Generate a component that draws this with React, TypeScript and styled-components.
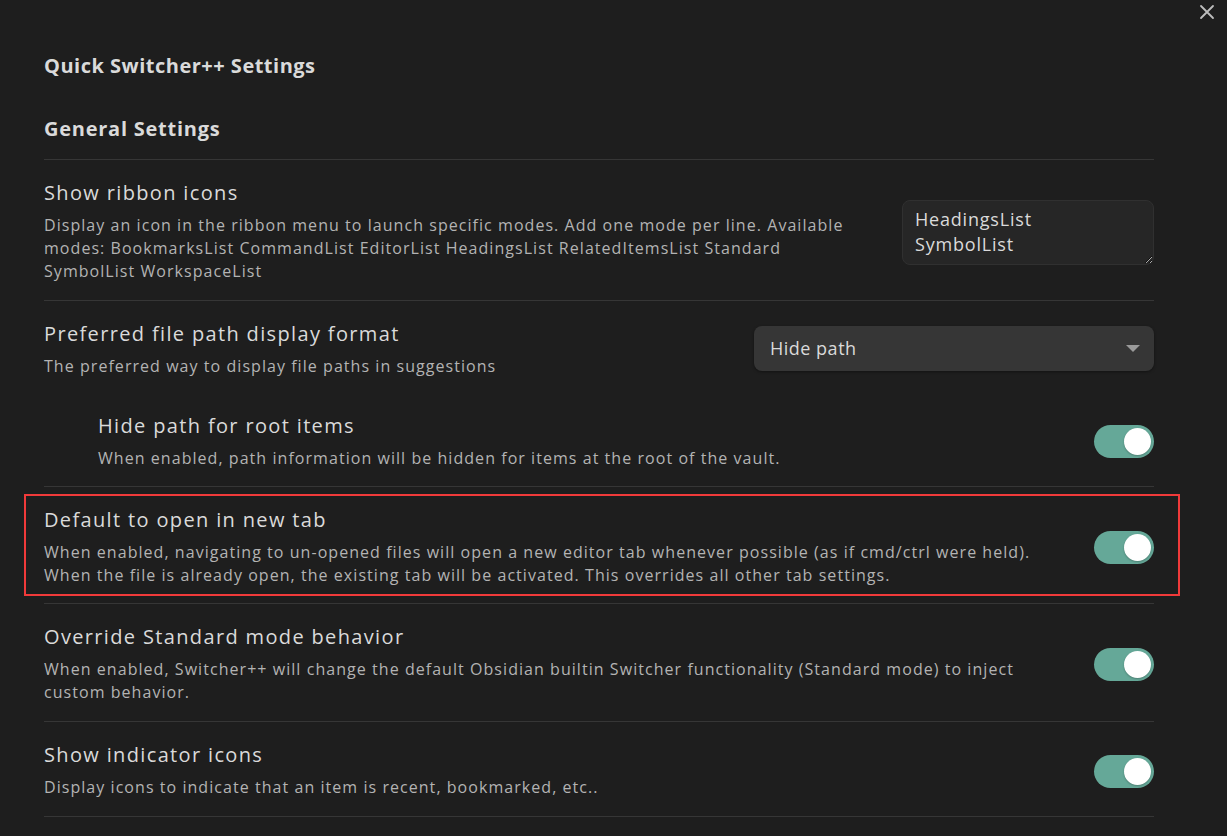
import React from "react";
import styled, { createGlobalStyle } from "styled-components";

const Global = createGlobalStyle`
  html, body { margin: 0; padding: 0; background: #1e1e1e; }
  body { font-family: "Open Sans", "Noto Sans", sans-serif; color: #dadada; }
  * { box-sizing: border-box; }
`;

const Page = styled.div`
  position: relative;
  width: 1227px;
  height: 836px;
  overflow: hidden;
  background: #1e1e1e;
  padding: 54px 73px 0 44px;
`;

const Close = styled.button`
  position: absolute;
  top: 2px;
  right: 10px;
  width: 20px;
  height: 20px;
  padding: 0;
  border: none;
  background: transparent;
  display: flex;
  align-items: center;
  justify-content: center;
`;

const Title = styled.h2`
  margin: 0;
  font-size: 20px;
  line-height: 24px;
  font-weight: 700;
  letter-spacing: 0.5px;
  color: #dadada;
`;

const SectionHeading = styled.h3`
  margin: 39px 0 0;
  padding-bottom: 18px;
  font-size: 20px;
  line-height: 24px;
  font-weight: 700;
  letter-spacing: 0.75px;
  color: #dadada;
  border-bottom: 1px solid #363636;
`;

const Row = styled.div<{ $indent?: boolean; $last?: boolean }>`
  position: relative;
  display: flex;
  align-items: center;
  gap: 40px;
  padding: ${(p) => (p.$indent ? "19px 0 16px 54px" : "21px 0 16.8px 0")};
  border-bottom: ${(p) => (p.$last ? "none" : "1px solid #363636")};
`;

const Info = styled.div`
  flex: 1;
  min-width: 0;
`;

const Name = styled.div`
  font-size: 20px;
  line-height: 24px;
  letter-spacing: 1.35px;
  color: #dadada;
`;

const Desc = styled.div`
  margin-top: 9px;
  font-size: 16px;
  line-height: 23px;
  letter-spacing: 1.05px;
  color: #b3b3b3;
  white-space: nowrap;
`;

const Control = styled.div`
  flex: none;
  display: flex;
  align-items: center;
`;

const TextArea = styled.textarea`
  width: 252px;
  height: 65px;
  resize: vertical;
  background: #262626;
  border: 1px solid #303030;
  border-radius: 8px;
  padding: 6px 12px;
  font-family: inherit;
  font-size: 18px;
  line-height: 25px;
  letter-spacing: 0.8px;
  color: #dadada;
  outline: none;
`;

const Select = styled.div`
  width: 400px;
  height: 45px;
  margin-top: -3px;
  background: #363636;
  border-radius: 8px;
  box-shadow: 0 1px 3px rgba(0, 0, 0, 0.4);
  padding: 0 16px;
  display: flex;
  align-items: center;
  justify-content: space-between;
  font-size: 18px;
  letter-spacing: 0.5px;
  color: #dadada;
`;

const Caret = styled.span`
  width: 0;
  height: 0;
  border-left: 7px solid transparent;
  border-right: 7px solid transparent;
  border-top: 7px solid #9a9a9a;
  margin-right: -2px;
`;

const Toggle = styled.div<{ $on?: boolean }>`
  width: 60px;
  height: 33px;
  border-radius: 17px;
  background: ${(p) => (p.$on ? "#65a898" : "#3f3f3f")};
  display: flex;
  align-items: center;
  justify-content: ${(p) => (p.$on ? "flex-end" : "flex-start")};
  padding: 0 3px;
`;

const Knob = styled.span`
  width: 27px;
  height: 27px;
  border-radius: 50%;
  background: #ffffff;
  box-shadow: 0 1px 2px rgba(0, 0, 0, 0.25);
`;

const Highlight = styled.div`
  position: absolute;
  left: -20px;
  right: -26px;
  top: 7px;
  bottom: 7px;
  border: 2px solid #f03a3a;
  pointer-events: none;
`;

const Lines = ({ lines }: { lines: string[] }) => (
  <Desc>
    {lines.map((l, i) => (
      <React.Fragment key={i}>
        {l}
        {i < lines.length - 1 && <br />}
      </React.Fragment>
    ))}
  </Desc>
);

export default function App() {
  return (
    <>
      <Global />
      <Page>
        <Close aria-label="Close">
          <svg width="16" height="16" viewBox="0 0 16 16">
            <path d="M2 2 L14 14 M14 2 L2 14" stroke="#bdbdbd" strokeWidth="1.8" strokeLinecap="round" />
          </svg>
        </Close>
        <Title>Quick Switcher++ Settings</Title>
        <SectionHeading>General Settings</SectionHeading>

        <Row>
          <Info>
            <Name>Show ribbon icons</Name>
            <Lines
              lines={[
                "Display an icon in the ribbon menu to launch specific modes. Add one mode per line. Available",
                "modes: BookmarksList CommandList EditorList HeadingsList RelatedItemsList Standard",
                "SymbolList WorkspaceList",
              ]}
            />
          </Info>
          <Control>
            <TextArea defaultValue={"HeadingsList\nSymbolList"} spellCheck={false} />
          </Control>
        </Row>

        <Row $last>
          <Info>
            <Name>Preferred file path display format</Name>
            <Lines lines={["The preferred way to display file paths in suggestions"]} />
          </Info>
          <Control>
            <Select>
              <span>Hide path</span>
              <Caret />
            </Select>
          </Control>
        </Row>

        <Row $indent>
          <Info>
            <Name>Hide path for root items</Name>
            <Lines lines={["When enabled, path information will be hidden for items at the root of the vault."]} />
          </Info>
          <Control>
            <Toggle $on>
              <Knob />
            </Toggle>
          </Control>
        </Row>

        <Row>
          <Highlight />
          <Info>
            <Name>Default to open in new tab</Name>
            <Lines
              lines={[
                "When enabled, navigating to un-opened files will open a new editor tab whenever possible (as if cmd/ctrl were held).",
                "When the file is already open, the existing tab will be activated. This overrides all other tab settings.",
              ]}
            />
          </Info>
          <Control>
            <Toggle $on>
              <Knob />
            </Toggle>
          </Control>
        </Row>

        <Row>
          <Info>
            <Name>Override Standard mode behavior</Name>
            <Lines
              lines={[
                "When enabled, Switcher++ will change the default Obsidian builtin Switcher functionality (Standard mode) to inject",
                "custom behavior.",
              ]}
            />
          </Info>
          <Control>
            <Toggle $on>
              <Knob />
            </Toggle>
          </Control>
        </Row>

        <Row>
          <Info>
            <Name>Show indicator icons</Name>
            <Lines lines={["Display icons to indicate that an item is recent, bookmarked, etc.."]} />
          </Info>
          <Control>
            <Toggle $on>
              <Knob />
            </Toggle>
          </Control>
        </Row>
      </Page>
    </>
  );
}
